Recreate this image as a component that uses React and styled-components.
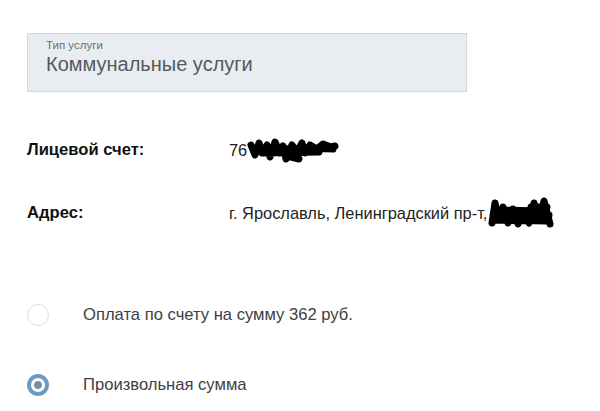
import React from "react";
import styled, { createGlobalStyle } from "styled-components";

const Global = createGlobalStyle`
  body {
    margin: 0;
    background: #fff;
    font-family: "Liberation Sans", Arial, sans-serif;
  }
`;

const Page = styled.div`
  width: 600px;
  height: 411px;
  padding: 33px 0 0 27px;
  box-sizing: border-box;
  overflow: hidden;
`;

const Select = styled.div`
  width: 440px;
  height: 59px;
  box-sizing: border-box;
  background: #e9edf1;
  border: 1px solid #d3d8dd;
  padding: 5px 18px 0;
`;

const SelectLabel = styled.div`
  font-size: 11.5px;
  color: #6b6f74;
  line-height: 13px;
`;

const SelectValue = styled.div`
  font-size: 20px;
  color: #55595e;
  line-height: 24px;
`;

const InfoRow = styled.div`
  display: flex;
  align-items: center;
  height: 26px;
  margin-top: ${(p) => p.$top}px;
`;

const InfoLabel = styled.div`
  width: 202px;
  font-size: 16.6px;
  font-weight: bold;
  color: #111;
`;

const InfoValue = styled.div`
  display: flex;
  align-items: center;
  font-size: 16.4px;
  color: #222;
  white-space: nowrap;
`;

const Options = styled.div`
  display: flex;
  flex-direction: column;
  gap: 44px;
  margin-top: 76px;
`;

const Option = styled.label`
  display: flex;
  align-items: center;
  height: 26px;
`;

const Radio = styled.span`
  width: 22px;
  height: 22px;
  box-sizing: border-box;
  border-radius: 50%;
  margin-right: 34px;
  flex-shrink: 0;
  border: ${(p) => (p.$checked ? "4px solid #6b9bc4" : "1px solid #dcdfe2")};
  background: ${(p) =>
    p.$checked ? "radial-gradient(circle, #7a8ea3 0 3.5px, #fff 4.5px)" : "#fff"};
`;

const OptionText = styled.span`
  font-size: 16.6px;
  color: #3d4044;
`;

const Scribble = ({ w, h, d }) => (
  <svg width={w} height={h} viewBox={`0 0 ${w} ${h}`}>
    <path d={d} fill="none" stroke="#000" strokeWidth="7" strokeLinecap="round" strokeLinejoin="round" />
  </svg>
);

export default function App() {
  return (
    <>
      <Global />
      <Page>
        <Select>
          <SelectLabel>Тип услуги</SelectLabel>
          <SelectValue>Коммунальные услуги</SelectValue>
        </Select>

        <InfoRow $top={45}>
          <InfoLabel>Лицевой счет:</InfoLabel>
          <InfoValue>
            76
            <Scribble
              w={92}
              h={26}
              d="M4 8 L8 18 L12 6 L15 16 L20 8 L23 20 L28 5 L33 16 L36 9 L39 22 L45 8 L50 15 L55 6 L58 16 L63 8 L70 12 L76 7 L84 10 L88 9 M6 12 L30 12 L60 11 L86 12 M16 16 L72 15 M40 19 L52 22"
            />
          </InfoValue>
        </InfoRow>

        <InfoRow $top={37}>
          <InfoLabel>Адрес:</InfoLabel>
          <InfoValue>
            г. Ярославль, Ленинградский пр-т,
            <Scribble
              w={68}
              h={32}
              d="M5 26 L8 6 L12 22 L16 10 L21 26 L26 12 L31 27 L36 14 L42 26 L47 6 L52 24 L57 4 L63 27 M6 18 L62 18 M8 23 L60 24 M10 13 L58 14 M44 10 L60 10"
            />
          </InfoValue>
        </InfoRow>

        <Options>
          <Option>
            <Radio />
            <OptionText>Оплата по счету на сумму 362 руб.</OptionText>
          </Option>
          <Option>
            <Radio $checked />
            <OptionText>Произвольная сумма</OptionText>
          </Option>
        </Options>
      </Page>
    </>
  );
}
